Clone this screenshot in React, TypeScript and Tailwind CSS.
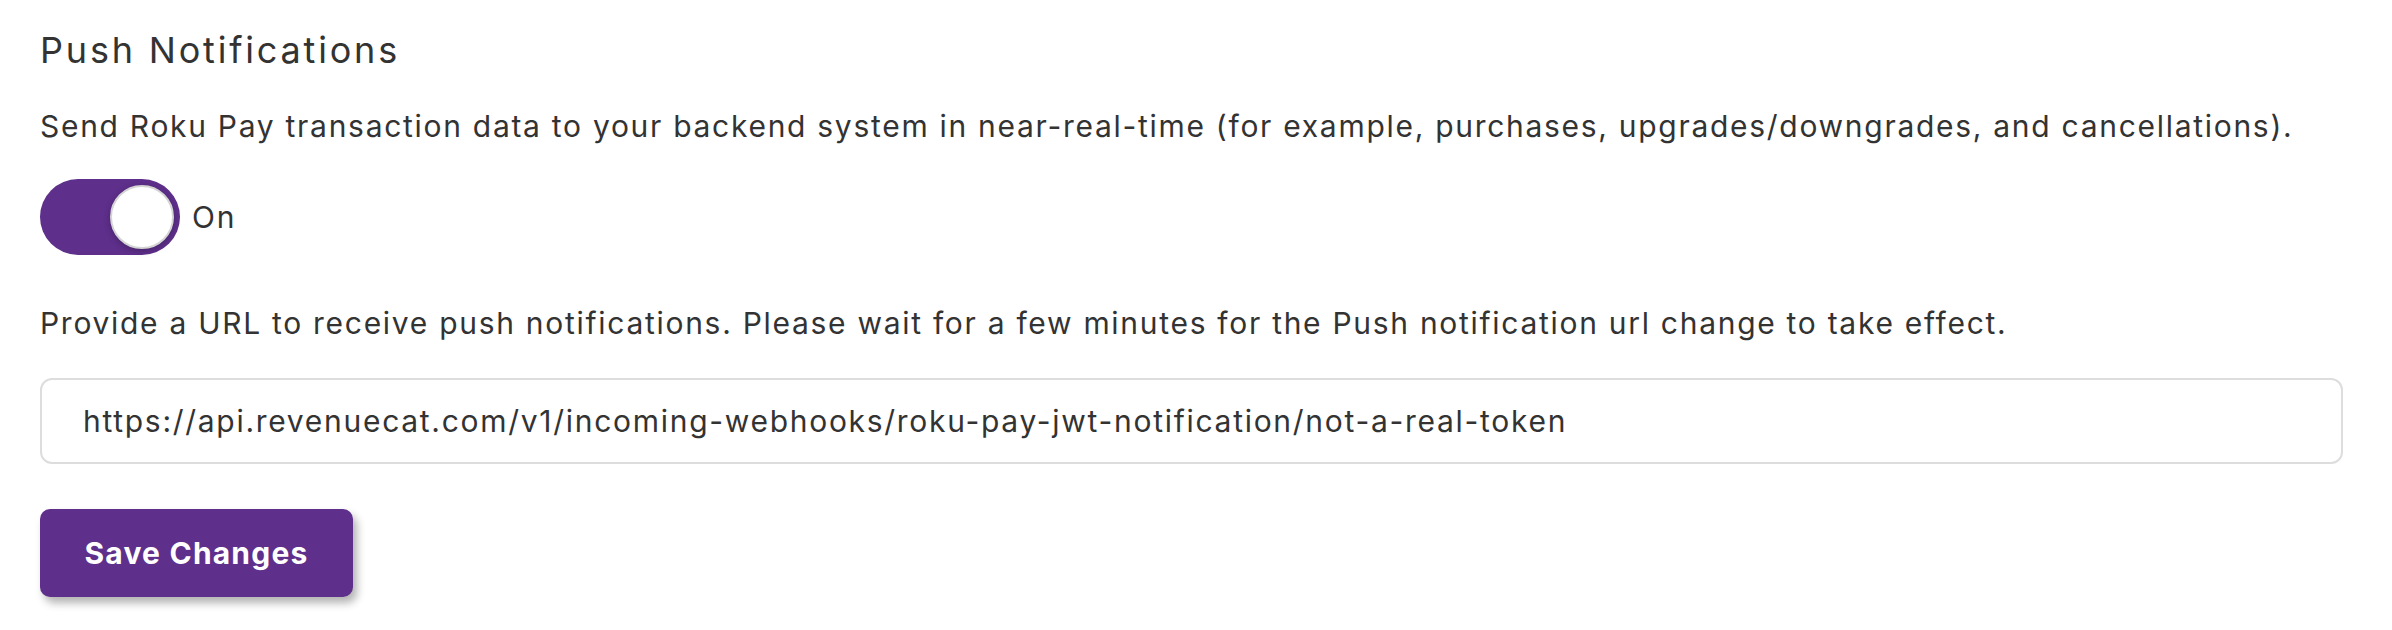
export default function App() {
  return (
    <div className="min-h-[630px] w-full bg-white pl-[40px] pr-[49px] pt-[28px] text-[#333333]" style={{ fontFamily: "Inter, 'Noto Sans', sans-serif" }}>
      <h2 className="text-[36px] leading-[44px] font-normal tracking-[0.078em]">Push Notifications</h2>
      <p className="mt-[36px] text-[30px] leading-[36px] tracking-[0.057em]">
        Send Roku Pay transaction data to your backend system in near-real-time (for example, purchases, upgrades/downgrades, and cancellations).
      </p>

      <div className="mt-[35px] flex items-center gap-[12px]">
        <button className="flex h-[76px] w-[140px] items-center justify-end rounded-full bg-[#5e2f8b] pr-[6px]">
          <span className="h-[64px] w-[64px] rounded-full border-2 border-[#d4d4d4] bg-white shadow-[0_2px_6px_rgba(0,0,0,0.25)]" />
        </button>
        <span className="text-[30px] leading-[36px] tracking-[0.057em]">On</span>
      </div>

      <p className="mt-[50px] text-[30px] leading-[36px] tracking-[0.057em]">
        Provide a URL to receive push notifications. Please wait for a few minutes for the Push notification url change to take effect.
      </p>

      <div className="mt-[37px] flex h-[86px] items-center rounded-[12px] border-2 border-[#dddddd] px-[41px]">
        <span className="text-[30px] leading-[36px] tracking-[0.057em]">
          https://api.revenuecat.com/v1/incoming-webhooks/roku-pay-jwt-notification/not-a-real-token
        </span>
      </div>

      <button className="mt-[45px] flex h-[88px] w-[313px] items-center justify-center rounded-[10px] bg-[#5e2f8b] text-[30px] font-bold tracking-[0.04em] text-white shadow-[4px_6px_8px_rgba(0,0,0,0.3)]">
        Save Changes
      </button>
    </div>
  );
}
